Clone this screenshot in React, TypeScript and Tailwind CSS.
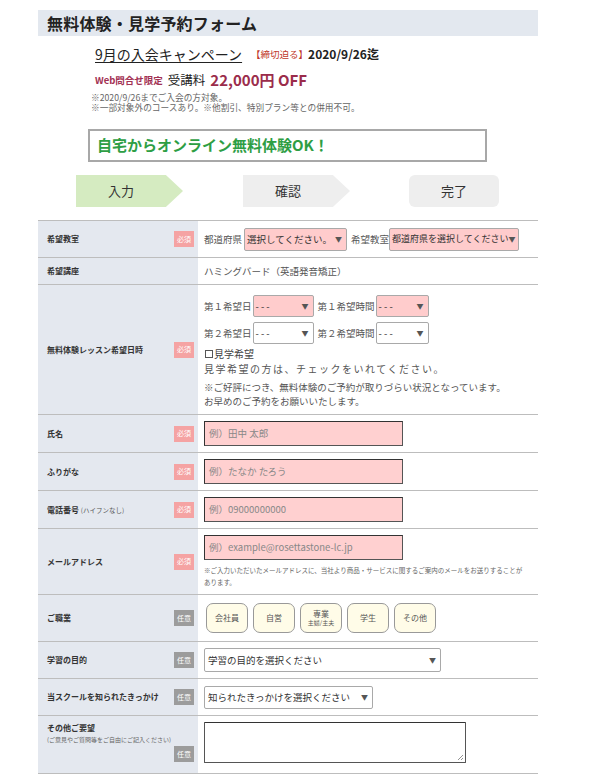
import React from "react";

const Badge = ({ req }: { req: boolean }) => (
  <div
    className={
      req
        ? "w-[20px] h-[16px] shrink-0 bg-[#f5a3a3] text-white text-[7px] leading-none flex items-center justify-center"
        : "w-[20px] h-[16px] shrink-0 bg-[#9c9c9c] text-white text-[7px] leading-none flex items-center justify-center"
    }
  >
    {req ? "必須" : "任意"}
  </div>
);

const Sel = ({
  cls,
  pink,
  text,
}: {
  cls: string;
  pink?: boolean;
  text: string;
}) => (
  <div
    className={
      (pink ? "bg-[#ffcccc] " : "bg-white ") +
      "border border-[#a9a9a9] rounded-[2px] flex items-center justify-between pl-[2px] pr-[4px] text-[#333] " +
      cls
    }
  >
    <span className="whitespace-nowrap">{text}</span>
    <span className="text-[7px] text-[#555]">▼</span>
  </div>
);

const Input = ({ ph }: { ph: string }) => (
  <div className="w-[199px] h-[25px] bg-[#ffd0d0] border border-[#555] border-t-[#333] border-l-[#333] flex items-center pl-[4px] text-[9.5px] text-[#888]">
    {ph}
  </div>
);

const Row = ({
  label,
  req,
  h,
  children,
  center = true,
}: {
  label: React.ReactNode;
  req: boolean | null;
  h: string;
  children: React.ReactNode;
  center?: boolean;
}) => (
  <div className={"flex border-t border-[#bdbdbd] " + h}>
    <div className="w-[160px] shrink-0 bg-[#e4e8ef] flex items-center justify-between pl-[9px] pr-[4px]">
      <div className="text-[8px] font-bold text-[#333] whitespace-nowrap">{label}</div>
      {req !== null && <Badge req={req} />}
    </div>
    <div
      className={
        center
          ? "flex-1 pl-[6px] flex items-center text-[9.5px] text-[#555]"
          : "flex-1 pl-[6px] flex flex-col text-[9.5px] text-[#555]"
      }
    >
      {children}
    </div>
  </div>
);

const Job = ({ t, sub }: { t: string; sub?: string }) => (
  <div className="w-[42px] h-[30px] bg-[#fffce8] border border-[#999] rounded-[7px] flex flex-col items-center justify-center text-[8px] text-[#555] leading-[10px]">
    <span>{t}</span>
    {sub && <span className="text-[6px] leading-[8px]">{sub}</span>}
  </div>
);

export default function App() {
  return (
    <div className="w-[593px] min-h-[776px] bg-white font-['Noto_Sans_CJK_JP','Noto_Sans',sans-serif] text-[#333] pt-[10px]">
      <div className="ml-[38px] w-[500px] h-[26px] bg-[#e3e8ef] pl-[9px] flex items-center text-[16px] font-bold text-[#222] tracking-[0.2px]">
        無料体験・見学予約フォーム
      </div>

      <div className="ml-[95px] mt-[9px] h-[18px] flex items-center whitespace-nowrap">
        <span className="text-[14px] underline underline-offset-[2px] text-[#222]">9月の入会キャンペーン</span>
        <span className="ml-[9px] text-[9.5px] text-[#c0392b]">【締切迫る】</span>
        <span className="text-[12px] font-bold text-[#222]">2020/9/26迄</span>
      </div>
      <div className="ml-[95px] mt-[8px] h-[18px] flex items-center whitespace-nowrap">
        <span className="text-[9.5px] font-bold text-[#a23153]">Web問合せ限定</span>
        <span className="ml-[5px] text-[12.5px] text-[#222]">受講料</span>
        <span className="ml-[5px] text-[15px] font-bold text-[#9b2c4b]">22,000円 OFF</span>
      </div>
      <div className="ml-[91px] mt-[4px] text-[8.7px] leading-[10px] text-[#666]">
        <div className="h-[10px]">※2020/9/26までご入会の方対象。</div>
        <div className="h-[10px]">※一部対象外のコースあり。※他割引、特別プラン等との併用不可。</div>
      </div>

      <div className="ml-[88px] mt-[16px] w-[399px] h-[33px] border-2 border-[#a8a8a8] flex items-center pl-[7px] text-[15px] font-bold text-[#2e9e44]">
        自宅からオンライン無料体験OK！
      </div>

      <div className="mt-[13px] h-[32px] flex text-[13px] text-[#333]">
        <div className="ml-[76px] w-[107px] h-[32px] bg-[#d5ebc1] [clip-path:polygon(0_0,84%_0,100%_50%,84%_100%,0_100%)] flex items-center justify-center pr-[17px]">
          入力
        </div>
        <div className="ml-[60px] w-[107px] h-[32px] bg-[#eeeeee] [clip-path:polygon(0_0,84%_0,100%_50%,84%_100%,0_100%)] flex items-center justify-center pr-[17px]">
          確認
        </div>
        <div className="ml-[59px] w-[90px] h-[32px] bg-[#eeeeee] rounded-[6px] flex items-center justify-center">
          完了
        </div>
      </div>

      <div className="ml-[38px] w-[500px] mt-[13px] border-b border-[#bdbdbd]">
        <Row label="希望教室" req h="h-[37px]">
          <span>都道府県</span>
          <Sel cls="ml-[2px] w-[103px] h-[23px] text-[9.5px]" pink text="選択してください。" />
          <span className="ml-[4px]">希望教室</span>
          <Sel cls="w-[130px] h-[23px] text-[9px] pr-[2px]" pink text="都道府県を選択してください" />
        </Row>
        <Row label="希望講座" req={null} h="h-[27px]">
          <span>ハミングバード（英語発音矯正）</span>
        </Row>
        <Row label="無料体験レッスン希望日時" req h="h-[130px]" center={false}>
          <div className="mt-[10px] flex items-center">
            <span>第１希望日</span>
            <Sel cls="ml-[1px] w-[61px] h-[22px] text-[9.5px]" pink text="- - -" />
            <span className="ml-[4px]">第１希望時間</span>
            <Sel cls="ml-[1px] w-[53px] h-[22px] text-[9.5px]" pink text="- - -" />
          </div>
          <div className="mt-[5px] flex items-center">
            <span>第２希望日</span>
            <Sel cls="ml-[1px] w-[61px] h-[22px] text-[9.5px]" text="- - -" />
            <span className="ml-[4px]">第２希望時間</span>
            <Sel cls="ml-[1px] w-[53px] h-[22px] text-[9.5px]" text="- - -" />
          </div>
          <div className="mt-[2px] leading-[16px] text-[10px] text-[#444] flex items-center">
            <span className="inline-block w-[8px] h-[8px] border border-[#555] mr-[1px] ml-[1px]"></span>
            <span>見学希望</span>
          </div>
          <div className="leading-[14px] text-[10px] tracking-[1.5px]">見学希望の方は、チェックをいれてください。</div>
          <div className="mt-[4px] leading-[14px] text-[9.5px]">
            <div>※ご好評につき、無料体験のご予約が取りづらい状況となっています。</div>
            <div>お早めのご予約をお願いいたします。</div>
          </div>
        </Row>
        <Row label="氏名" req h="h-[38px]">
          <Input ph="例）田中 太郎" />
        </Row>
        <Row label="ふりがな" req h="h-[38px]">
          <Input ph="例）たなか たろう" />
        </Row>
        <Row
          label={
            <span>
              電話番号 <span className="font-normal text-[6.5px] text-[#555]">(ハイフンなし)</span>
            </span>
          }
          req
          h="h-[38px]"
        >
          <Input ph="例）09000000000" />
        </Row>
        <Row label="メールアドレス" req h="h-[66px]" center={false}>
          <div className="mt-[6px]">
            <Input ph="例）example@rosettastone-lc.jp" />
          </div>
          <div className="mt-[4px] w-[322px] text-[6.5px] leading-[12px] text-[#666]">
            ※ご入力いただいたメールアドレスに、当社より商品・サービスに関するご案内のメールをお送りすることがあります。
          </div>
        </Row>
        <Row label="ご職業" req={false} h="h-[47px]">
          <div className="flex gap-[5px] ml-[2px]">
            <Job t="会社員" />
            <Job t="自営" />
            <Job t="専業" sub="主婦/主夫" />
            <Job t="学生" />
            <Job t="その他" />
          </div>
        </Row>
        <Row label="学習の目的" req={false} h="h-[37px]">
          <Sel cls="w-[237px] h-[24px] pl-[3px] text-[9.5px]" text="学習の目的を選択ください" />
        </Row>
        <Row label="当スクールを知られたきっかけ" req={false} h="h-[37px]">
          <Sel cls="w-[169px] h-[23px] pl-[3px] text-[9.5px]" text="知られたきっかけを選択ください" />
        </Row>
        <div className="flex border-t border-[#bdbdbd] h-[58px]">
          <div className="w-[160px] shrink-0 bg-[#e4e8ef] flex flex-col pl-[9px] pr-[4px] pt-[6px]">
            <div className="text-[8px] font-bold leading-[12px] text-[#333]">その他ご要望</div>
            <div className="text-[6px] leading-[11px] text-[#666] whitespace-nowrap">(ご意見やご質問等をご自由にご記入ください)</div>
            <div className="flex justify-end mt-[1px]">
              <Badge req={false} />
            </div>
          </div>
          <div className="flex-1 pl-[6px] pt-[6px]">
            <div className="relative w-[262px] h-[41px] border border-[#555] border-t-[#333] bg-white rounded-[1px]">
              <svg className="absolute right-[1px] bottom-[1px]" width="7" height="7" viewBox="0 0 7 7">
                <line x1="6" y1="1" x2="1" y2="6" stroke="#777" strokeWidth="0.8" />
                <line x1="6" y1="4" x2="4" y2="6" stroke="#777" strokeWidth="0.8" />
              </svg>
            </div>
          </div>
        </div>
      </div>
    </div>
  );
}
